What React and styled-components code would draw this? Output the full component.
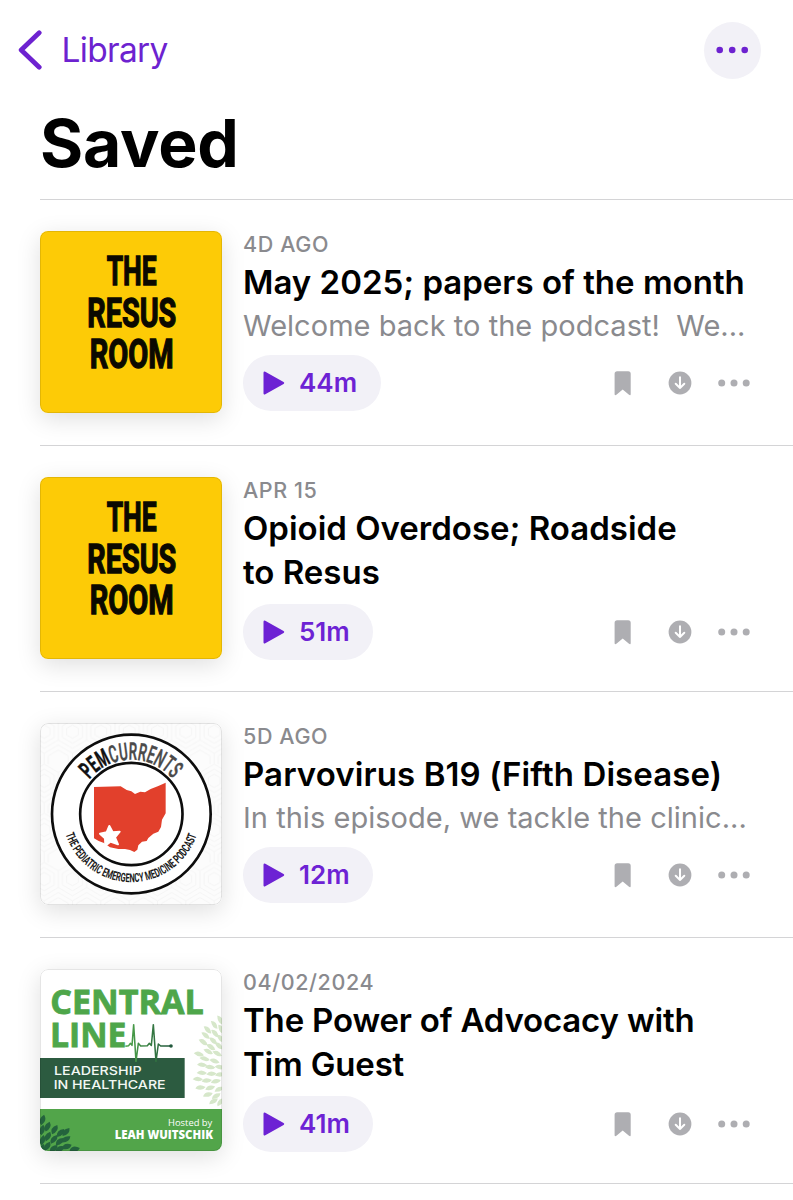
import styled, { createGlobalStyle } from "styled-components";

const episodes = [
  {
    id: 1,
    cover: "resus",
    date: "4D AGO",
    title: ["May 2025; papers of the month"],
    tracking: "0",
    summary: "Welcome back to the podcast!\u00a0 We...",
    length: "44m",
  },
  {
    id: 2,
    cover: "resus",
    date: "APR 15",
    title: ["Opioid Overdose; Roadside", "to Resus"],
    tracking: "0",
    length: "51m",
  },
  {
    id: 3,
    cover: "pem",
    date: "5D AGO",
    title: ["Parvovirus B19 (Fifth Disease)"],
    tracking: "0.1px",
    summary: "In this episode, we tackle the clinic...",
    length: "12m",
  },
  {
    id: 4,
    cover: "central",
    date: "04/02/2024",
    title: ["The Power of Advocacy with", "Tim Guest"],
    tracking: "-0.18px",
    length: "41m",
  },
];

// [x, y, angle]
const lightLeaves = [
  [570, 180, 60], [553, 195, 50], [573, 208, 60], [533, 210, 42], [555, 221, 45],
  [527, 227, 36], [550, 243, 38], [572, 236, 45], [520, 247, 30], [543, 262, 30],
  [567, 258, 38], [507, 283, 12], [535, 275, 24], [562, 281, 24], [524, 297, 12],
  [554, 304, 14], [517, 315, 4], [541, 322, 2], [570, 322, 6], [504, 358, 0],
  [516, 339, 0], [545, 342, -6], [571, 344, -10], [531, 362, -8], [558, 364, -16],
  [512, 383, -8], [541, 384, -20], [568, 388, -28], [534, 404, -20], [559, 408, -34],
  [551, 424, -34], [572, 426, -55],
];

const darkLeaves = [
  [38, 480, -75], [37, 510, -80], [53, 500, -68], [38, 541, -80], [54, 530, -65],
  [74, 509, -60], [72, 538, -55], [92, 519, -48], [52, 559, -60], [89, 545, -44],
  [108, 516, -50], [71, 566, -45], [108, 538, -35], [90, 567, -30],
  [110, 560, -22], [36, 567, -70], [134, 568, -14],
];

function ResusCover() {
  return (
    <CoverArt viewBox="30 33 546 546" $bg="#fdcb06">
      <g fontFamily="Roboto, sans-serif" fontWeight="700" fontSize="123" stroke="#0b0900" strokeWidth="4" fill="#0b0900">
        <text x="230" y="196" textLength="150" lengthAdjust="spacingAndGlyphs">THE</text>
        <text x="172" y="320" textLength="267" lengthAdjust="spacingAndGlyphs">RESUS</text>
        <text x="179" y="443" textLength="252" lengthAdjust="spacingAndGlyphs">ROOM</text>
      </g>
    </CoverArt>
  );
}

function PemCover() {
  return (
    <CoverArt viewBox="30 24 546 546" $bg="#fcfcfc">
      <defs>
        <path id="pem-top" d="M178 193 A163 163 0 0 1 429 193" />
        <path id="pem-bottom" d="M107 358 A207 207 0 0 0 501 358" />
        <pattern id="pem-lines" width="68" height="118" patternUnits="userSpaceOnUse" patternTransform="scale(1.25)">
          <g fill="none" stroke="#f3f3f3" strokeWidth="2">
            <path d="M34 0 L68 20 V60 L34 80 L0 60 V20 Z" />
            <path d="M34 12 L58 26 V54 L34 68 L10 54 V26 Z" />
            <path d="M34 24 L48 32 V48 L34 56 L20 48 V32 Z" />
            <path d="M0 72 L34 92 V118 M68 72 L34 92 M0 84 L24 98 V118 M68 84 L44 98 V118" />
          </g>
        </pattern>
      </defs>
      <rect x="30" y="24" width="546" height="546" fill="url(#pem-lines)" />
      <circle cx="304" cy="297" r="238" fill="#fff" stroke="#0d0d0d" strokeWidth="8" />
      <circle cx="304" cy="297" r="153.5" fill="#fff" stroke="#0d0d0d" strokeWidth="8" />
      <text fontFamily="Roboto, sans-serif" fontSize="72" fontWeight="700" fill="#111" stroke="#111" strokeWidth="1.5">
        <textPath href="#pem-top" textLength="284" lengthAdjust="spacingAndGlyphs">
          PEM<tspan fill="#4a4a4a" stroke="#4a4a4a" fontWeight="500">CURRENTS</tspan>
        </textPath>
      </text>
      <text fontFamily="Roboto, sans-serif" fontSize="37" fontWeight="700" fill="#1a1a1a">
        <textPath href="#pem-bottom" textLength="518" lengthAdjust="spacingAndGlyphs">
          THE PEDIATRIC EMERGENCY MEDICINE PODCAST
        </textPath>
      </text>
      <path
        d="M192 216 L272 214 L290 225 L304 229 L315 237 L331 230 L345 232 L362 222 L385 213 L407 203 V295 L396 314 L393 336 L385 350 L370 356 L355 369 L350 378 L336 380 L325 391 L322 404 L313 411 L300 405 L285 402 L265 402 L240 397 L222 384 L206 378 L192 370 Z"
        fill="#e2402c"
      />
      <path
        d="M238 333 L248 352 L269 350 L255 367 L264 388 L241 380 L226 392 L225 370 L210 356 L230 352 Z"
        fill="#fff"
        stroke="#fff"
        strokeWidth="6"
        strokeLinejoin="round"
      />
    </CoverArt>
  );
}

function CentralCover() {
  return (
    <CoverArt viewBox="30 27 546 546" $bg="#fff">
      <defs>
        <linearGradient id="pulse" x1="0" x2="1">
          <stop offset="0" stopColor="#4ea64a" />
          <stop offset="1" stopColor="#22583c" />
        </linearGradient>
      </defs>
      {lightLeaves.map(([x, y, a]) => (
        <path key={`${x}-${y}`} d="M-16 0 Q-4 -15 15 0 Q4 12 -16 0" transform={`translate(${x} ${y}) rotate(${a})`} fill="#d6e7ca" />
      ))}
      <g fontFamily="'Open Sans', sans-serif" fontWeight="700" fontSize="100" fill="#4ea64a" stroke="#4ea64a" strokeWidth="2.5">
        <text x="61" y="161" textLength="460" lengthAdjust="spacingAndGlyphs">CENTRAL</text>
        <text x="60" y="260" textLength="229" lengthAdjust="spacingAndGlyphs">LINE</text>
      </g>
      <rect x="30" y="294" width="434" height="120" fill="#2c5b40" />
      <path
        d="M286 259 L296 257 L301 250 L306 256 L311 194 L318 304 L325 250 L332 258 L352 257 L358 250 L364 256 L370 194 L378 304 L385 252 L392 258 H422"
        fill="none"
        stroke="url(#pulse)"
        strokeWidth="4.6"
        strokeLinejoin="round"
      />
      <circle cx="423" cy="258" r="5.5" fill="#22583c" />
      <g fontFamily="Inter, sans-serif" fontWeight="500" fontSize="36" fill="#f3f8f4">
        <text x="72" y="345" textLength="263" lengthAdjust="spacingAndGlyphs">LEADERSHIP</text>
        <text x="71" y="388" textLength="336" lengthAdjust="spacingAndGlyphs">IN HEALTHCARE</text>
      </g>
      <rect x="30" y="447" width="546" height="130" fill="#52a54a" />
      {darkLeaves.map(([x, y, a]) => (
        <path key={`${x}-${y}`} d="M-16 0 Q-3 -17 16 0 Q3 15 -16 0" transform={`translate(${x} ${y}) rotate(${a})`} fill="#24633d" />
      ))}
      <g fontFamily="'Open Sans', sans-serif" fill="#fff">
        <text x="414" y="498" fontSize="28" fontWeight="500" textLength="133" lengthAdjust="spacingAndGlyphs">Hosted by</text>
        <text x="254" y="538" fontSize="34" fontWeight="800" textLength="295" lengthAdjust="spacingAndGlyphs">LEAH WUITSCHIK</text>
      </g>
    </CoverArt>
  );
}

const covers = { resus: ResusCover, pem: PemCover, central: CentralCover };

function Episode({ episode }) {
  const Cover = covers[episode.cover];

  return (
    <Row>
      <CoverFrame>
        <Cover />
      </CoverFrame>
      <Details>
        <DateLabel>{episode.date}</DateLabel>
        <Title $tracking={episode.tracking}>
          {episode.title.map((line) => (
            <span key={line}>{line}</span>
          ))}
        </Title>
        {episode.summary && <Summary>{episode.summary}</Summary>}
        <Controls $hasSummary={!!episode.summary}>
          <PlayButton>
            <svg width="22" height="24" viewBox="0 0 22 24">
              <path d="M1.7 1.7 L20 12 L1.7 22.3 Z" fill="currentColor" stroke="currentColor" strokeWidth="2.4" strokeLinejoin="round" />
            </svg>
            <span>{episode.length}</span>
          </PlayButton>
          <Actions>
            <svg width="17" height="25" viewBox="0 0 17 25">
              <path d="M3.2 0.3 H14.2 Q16.7 0.3 16.7 2.8 V23 Q16.7 25 15 23.8 L8.7 18.6 L2.4 23.8 Q0.6 25 0.6 23 V2.8 Q0.6 0.3 3.2 0.3 Z" fill="currentColor" />
            </svg>
            <svg width="24" height="24" viewBox="0 0 24 24">
              <circle cx="12" cy="12" r="11.4" fill="currentColor" />
              <path d="M12 6.3 V17 M7.7 12.8 L12 17 L16.3 12.8" fill="none" stroke="#fff" strokeWidth="2" strokeLinecap="round" strokeLinejoin="round" />
            </svg>
            <svg width="32" height="8" viewBox="0 0 32 8">
              <circle cx="3.7" cy="4" r="3.5" fill="currentColor" />
              <circle cx="16" cy="4" r="3.5" fill="currentColor" />
              <circle cx="28.2" cy="4" r="3.5" fill="currentColor" />
            </svg>
          </Actions>
        </Controls>
      </Details>
    </Row>
  );
}

function App() {
  return (
    <>
      <GlobalStyle />
      <Screen>
        <TopBar>
          <BackLink>
            <svg width="24" height="40" viewBox="0 0 24 40">
              <path d="M21.2 2.8 L3.2 20 L21.2 37.2" fill="none" stroke="currentColor" strokeWidth="4.8" strokeLinecap="round" strokeLinejoin="round" />
            </svg>
            <span>Library</span>
          </BackLink>
          <MoreButton>
            <svg width="34" height="8" viewBox="0 0 34 8">
              <circle cx="3.7" cy="4" r="3.3" fill="currentColor" />
              <circle cx="16.2" cy="4" r="3.3" fill="currentColor" />
              <circle cx="28.7" cy="4" r="3.3" fill="currentColor" />
            </svg>
          </MoreButton>
        </TopBar>
        <Heading>Saved</Heading>
        <List>
          {episodes.map((episode) => (
            <Episode key={episode.id} episode={episode} />
          ))}
        </List>
      </Screen>
    </>
  );
}

export default App;

const GlobalStyle = createGlobalStyle`
  * {
    box-sizing: border-box;
  }
  body {
    margin: 0;
    background-color: #fff;
    font-family: Inter, "Liberation Sans", sans-serif;
  }
  svg {
    display: block;
    flex-shrink: 0;
  }
`;

const Screen = styled.div`
  height: 1200px;
  overflow: hidden;
`;

const TopBar = styled.header`
  display: flex;
  align-items: center;
  justify-content: space-between;
  height: 100px;
  padding: 0 32px 0 18px;
  color: #6d22d0;
`;

const BackLink = styled.div`
  display: flex;
  align-items: center;
  gap: 19.5px;
  font-size: 33.5px;
  line-height: 40px;
  letter-spacing: -0.7px;
`;

const MoreButton = styled.button`
  display: flex;
  align-items: center;
  justify-content: center;
  width: 57px;
  height: 57px;
  padding: 0;
  border: none;
  border-radius: 50%;
  background-color: #f2f1f7;
  color: inherit;
`;

const Heading = styled.h1`
  margin: 0;
  height: 99px;
  padding: 3px 0 0 40px;
  font-size: 66px;
  font-weight: 700;
  line-height: 80px;
  letter-spacing: -0.2px;
`;

const List = styled.div`
  margin-left: 40px;
  border-bottom: 1px solid #d4d4d6;
`;

const Row = styled.article`
  display: flex;
  gap: 21px;
  height: 246px;
  padding-top: 31px;
  border-top: 1px solid #d4d4d6;
`;

const CoverFrame = styled.div`
  position: relative;
  width: 182px;
  height: 182px;
  flex-shrink: 0;
  border-radius: 8px;
  box-shadow: 0 6px 24px rgba(0, 0, 0, 0.13);
  overflow: hidden;
  &::after {
    content: "";
    position: absolute;
    inset: 0;
    border: 1px solid rgba(0, 0, 0, 0.1);
    border-radius: 8px;
  }
`;

const CoverArt = styled.svg`
  width: 182px;
  height: 182px;
  background-color: ${(props) => props.$bg};
`;

const Details = styled.div`
  width: 507px;
`;

const DateLabel = styled.div`
  color: #8a8a8e;
  font-size: 21.5px;
  font-weight: 550;
  line-height: 26px;
  letter-spacing: 0.6px;
`;

const Title = styled.h2`
  margin: 3px 0 0;
  font-size: 33px;
  font-weight: 600;
  line-height: 44px;
  letter-spacing: ${(props) => props.$tracking};
  white-space: nowrap;
  span {
    display: block;
  }
`;

const Summary = styled.p`
  margin: 4px 0 0;
  color: #8a8a8e;
  font-size: 29px;
  line-height: 36px;
  letter-spacing: 0.03px;
  white-space: nowrap;
`;

const Controls = styled.div`
  display: flex;
  align-items: center;
  justify-content: space-between;
  margin-top: ${(props) => (props.$hasSummary ? "11px" : "10px")};
`;

const PlayButton = styled.button`
  display: flex;
  align-items: center;
  gap: 14px;
  height: 56px;
  padding: 0 23.5px 0 20px;
  border: none;
  border-radius: 28px;
  background-color: #f2f1f7;
  color: #6d22d4;
  font-family: inherit;
  font-size: 26px;
  font-weight: 600;
  line-height: 32px;
  span {
    padding-bottom: 1px;
  }
`;

const Actions = styled.div`
  display: flex;
  align-items: center;
  color: #aeaeb2;
  svg:nth-child(2) {
    margin: 0 26px 0 37px;
  }
`;
